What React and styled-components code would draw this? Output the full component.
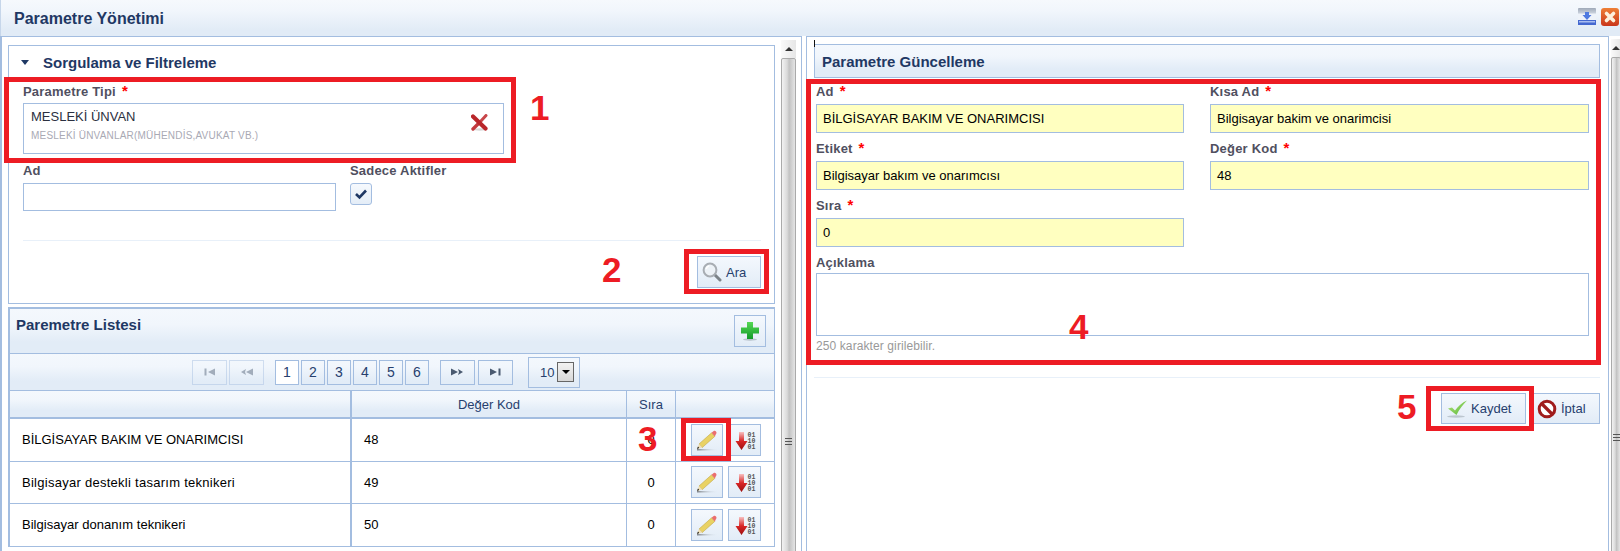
import React from "react";
import styled, { createGlobalStyle } from "styled-components";

const GlobalStyle = createGlobalStyle`
  html, body { margin: 0; padding: 0; background: #fff; }
  body { font-family: "Liberation Sans", Arial, sans-serif; font-size: 12px; color: #000; }
  * { box-sizing: border-box; }
`;

const line = "#a3bde0";
const headGradient = "linear-gradient(to bottom, #f4f8fd 0%, #f1f6fc 35%, #e2ecf7 75%, #e2ecf7 100%)";
const navy = "#1f3864";

const Page = styled.div`
  position: relative;
  width: 1620px;
  height: 551px;
  overflow: hidden;
  background: #fff;
`;

const TitleBar = styled.header`
  height: 36px;
  padding: 0 1px 0 13px;
  display: flex;
  align-items: center;
  justify-content: space-between;
  background: linear-gradient(to bottom, #f6f9fd 0%, #f1f6fc 30%, #e1ebf6 85%);
  border-left: 1px solid #c6d6ea;
`;

const PageTitle = styled.h1`
  margin: 2px 0 0 0;
  font-size: 16px;
  font-weight: bold;
  color: ${navy};
`;

const WindowIcons = styled.div`
  display: flex;
  gap: 5px;
  margin-top: -3px;
`;

const Body = styled.div`
  display: flex;
  height: 515px;
`;

const LeftPane = styled.div`
  width: 802px;
  flex: none;
  display: flex;
  border-top: 1px solid ${line};
  border-right: 1px solid ${line};
  border-left: 2px solid ${line};
  padding-left: 6px;
`;

const LeftContent = styled.div`
  width: 767px;
  flex: none;
  padding-top: 8px;
`;

const Scroller = styled.div`
  flex: none;
  width: ${(p) => p.$width}px;
  margin: 3px ${(p) => p.$right}px 0 ${(p) => p.$left}px;
  display: flex;
  flex-direction: column;
  overflow: hidden;
  background: #f3f3f3;
`;

const ScrollArrow = styled.div`
  height: 18px;
  flex: none;
  display: flex;
  align-items: center;
  justify-content: center;
  background: linear-gradient(to right, #fafafa, #e6e6e6);
  &::before {
    content: "";
    border-left: 4px solid transparent;
    border-right: 4px solid transparent;
    border-bottom: 4px solid #333;
  }
`;

const ScrollThumb = styled.div`
  flex: none;
  height: ${(p) => p.$height}px;
  border: 1px solid #aaa;
  border-radius: 2px 2px 0 0;
  background: linear-gradient(to right, #f2f2f2 0%, #d9d9d9 40%, #c2c2c2 55%, #e4e4e4 100%);
  display: flex;
  align-items: center;
  justify-content: center;
`;

const Grip = styled.div`
  width: 7px;
  height: 7px;
  border-top: 1px solid #555;
  border-bottom: 1px solid #555;
  &::before {
    content: "";
    display: block;
    margin-top: 2px;
    height: 1px;
    background: #555;
  }
`;

const FilterPanel = styled.section`
  height: 259px;
  border: 1px solid ${line};
  padding: 0 13px 0 14px;
  display: flex;
  flex-direction: column;
`;

const FilterHeading = styled.div`
  height: 38px;
  padding-bottom: 6px;
  display: flex;
  align-items: center;
  gap: 14px;
  margin-left: -2px;
  font-size: 15px;
  font-weight: bold;
  color: ${navy};
  &::before {
    content: "";
    margin-top: 1px;
    border-left: 4.5px solid transparent;
    border-right: 4.5px solid transparent;
    border-top: 5px solid ${navy};
  }
`;

const Label = styled.label`
  display: block;
  height: 16px;
  line-height: 16px;
  font-size: 13px;
  font-weight: bold;
  letter-spacing: 0.2px;
  color: #50505f;
  white-space: nowrap;
`;

const Star = styled.span`
  display: inline-block;
  margin-left: 6px;
  font-size: 15px;
  line-height: 12px;
  font-weight: bold;
  color: #f00;
  vertical-align: 0;
`;

const TypeBox = styled.div`
  position: relative;
  width: 481px;
  height: 51px;
  margin-top: 3px;
  padding: 4px 7px;
  border: 1px solid ${line};
`;

const TypeName = styled.div`
  font-size: 13px;
  line-height: 18px;
  color: #2b3040;
`;

const TypeHint = styled.div`
  font-size: 10px;
  line-height: 20px;
  letter-spacing: 0.2px;
  color: #a9a9b4;
`;

const ClearIcon = styled.span`
  position: absolute;
  right: 15px;
  top: 10px;
  display: block;
  line-height: 0;
`;

const FilterRow = styled.div`
  display: flex;
  gap: 14px;
  margin-top: 9px;
`;

const NameColumn = styled.div`
  width: 313px;
`;

const TextInput = styled.input`
  display: block;
  width: 100%;
  height: 28px;
  margin-top: 4px;
  border: 1px solid ${line};
  background: #fff;
  outline: none;
`;

const CheckBox = styled.span`
  display: flex;
  align-items: center;
  justify-content: center;
  width: 22px;
  height: 22px;
  margin-top: 4px;
  border: 1px solid ${line};
  border-radius: 3px;
  background: linear-gradient(to bottom, #f6f9fd, #e4edf7);
`;

const Divider = styled.hr`
  margin: ${(p) => p.$top}px 0 0;
  border: 0;
  height: 1px;
  background: #e8f0f9;
`;

const ButtonRow = styled.div`
  display: flex;
  justify-content: flex-end;
  gap: ${(p) => p.$gap || 0}px;
  margin-top: ${(p) => p.$top}px;
`;

const Button = styled.button`
  display: flex;
  align-items: center;
  gap: ${(p) => p.$gap}px;
  width: ${(p) => p.$width}px;
  height: ${(p) => p.$height}px;
  padding: 0 0 0 ${(p) => p.$pad}px;
  border: 1px solid ${line};
  background: linear-gradient(to bottom, #f4f8fd, #e2ecf7);
  font: 13px "Liberation Sans", Arial, sans-serif;
  color: #27406e;
`;

const ListPanel = styled.section`
  margin-top: 3px;
  border: 2px solid ${line};
  border-bottom: 0;
  border-right-width: 1px;
`;

const ListHeader = styled.div`
  height: 45px;
  padding: 6px 8px 0 6px;
  display: flex;
  justify-content: space-between;
  background: ${headGradient};
  border-bottom: 1px solid ${line};
`;

const ListTitle = styled.h2`
  margin: 1px 0 0;
  font-size: 15px;
  font-weight: bold;
  color: ${navy};
`;

const IconButton = styled.button`
  display: flex;
  align-items: center;
  justify-content: center;
  width: ${(p) => p.$width || 32}px;
  height: 32px;
  padding: 0;
  border: 1px solid ${line};
  background: linear-gradient(to bottom, #f4f8fd, #e2ecf7);
`;

const Pager = styled.div`
  height: 37px;
  padding: 0 0 0 182px;
  display: flex;
  align-items: center;
  background: ${headGradient};
  border-bottom: 1px solid ${line};
`;

const PageStep = styled.span`
  display: flex;
  align-items: center;
  justify-content: center;
  width: 35px;
  height: 25px;
  margin-right: ${(p) => p.$right || 0}px;
  border: 1px solid ${line};
  opacity: ${(p) => (p.$off ? 0.45 : 1)};
`;

const PageNumber = styled.span`
  display: flex;
  align-items: center;
  justify-content: center;
  width: 24px;
  height: 25px;
  margin-right: ${(p) => p.$right || 2}px;
  border: 1px solid ${line};
  background: ${(p) => (p.$active ? "#fff" : "transparent")};
  font-size: 14px;
  color: #27406e;
`;

const PageSize = styled.span`
  display: flex;
  align-items: center;
  justify-content: space-between;
  width: 52px;
  height: 31px;
  padding: 0 5px 0 11px;
  border: 1px solid ${line};
  font-size: 13px;
  color: #27406e;
`;

const SizeArrow = styled.span`
  display: flex;
  align-items: center;
  justify-content: center;
  width: 17px;
  height: 20px;
  border: 1px solid #666;
  background: linear-gradient(to bottom, #f2f2f2, #d8d8d8);
  &::before {
    content: "";
    border-left: 4px solid transparent;
    border-right: 4px solid transparent;
    border-top: 4px solid #000;
  }
`;

const GridRow = styled.div`
  display: grid;
  grid-template-columns: 342px 275px 49px 1fr;
  height: ${(p) => p.$height}px;
  border-bottom: ${(p) => p.$rule}px solid ${line};
  background: ${(p) => (p.$head ? headGradient : "#fff")};
`;

const Cell = styled.div`
  display: flex;
  align-items: center;
  justify-content: ${(p) => (p.$center ? "center" : "flex-start")};
  padding: 0 ${(p) => (p.$center ? 0 : 12)}px;
  border-right: ${(p) => p.$rule || 1}px solid ${line};
  font-size: 13px;
  letter-spacing: ${(p) => p.$spacing || 0}px;
  color: ${(p) => (p.$head ? "#27406e" : "#000")};
  &:last-child { border-right: 0; }
`;

const ActionCell = styled(Cell)`
  gap: 5px;
  padding: 0 0 0 15px;
`;

const RightPane = styled.div`
  margin-left: 4px;
  width: 803px;
  flex: none;
  border: 1px solid ${line};
  border-bottom: 0;
  padding: 7px 8px 0 7px;
`;

const FormHeader = styled.div`
  position: relative;
  height: 34px;
  display: flex;
  align-items: center;
  padding-left: 7px;
  border: 1px solid ${line};
  background: ${headGradient};
  font-size: 15px;
  font-weight: bold;
  color: ${navy};
  &::before {
    content: "";
    position: absolute;
    left: -1px;
    top: -5px;
    width: 1px;
    height: 7px;
    background: #111;
  }
`;

const FormGrid = styled.div`
  display: grid;
  grid-template-columns: 368px 379px;
  column-gap: 26px;
  row-gap: 8px;
  padding: 6px 0 0 2px;
`;

const Field = styled.div`
  grid-column: ${(p) => (p.$wide ? "1 / -1" : "auto")};
`;

const ValueBox = styled.div`
  height: 29px;
  margin-top: 4px;
  padding: 0 6px;
  display: flex;
  align-items: center;
  border: 1px solid ${line};
  background: #ffffc0;
  font-size: 13px;
  color: #000;
`;

const TextArea = styled.textarea`
  display: block;
  width: 100%;
  height: 63px;
  margin-top: 2px;
  border: 1px solid ${line};
  outline: none;
  resize: none;
`;

const Hint = styled.div`
  margin-top: 3px;
  line-height: 14px;
  font-size: 12px;
  letter-spacing: 0.1px;
  color: #999;
`;

const Mark = styled.div`
  position: absolute;
  left: ${(p) => p.$x}px;
  top: ${(p) => p.$y}px;
  width: ${(p) => p.$w}px;
  height: ${(p) => p.$h}px;
  border: 5px solid #ed1c24;
  pointer-events: none;
`;

const MarkNumber = styled.span`
  position: absolute;
  left: ${(p) => p.$x}px;
  top: ${(p) => p.$y}px;
  font-size: 35px;
  line-height: 36px;
  font-weight: bold;
  color: #ed1c24;
`;

const TopIcon = ({ kind }) =>
  kind === "down" ? (
    <svg width="18" height="18" viewBox="0 0 18 18">
      <defs>
        <linearGradient id="winFace" x1="0" y1="0" x2="0" y2="1">
          <stop offset="0" stopColor="#9fa9b8" />
          <stop offset="0.3" stopColor="#c8d0dc" />
          <stop offset="0.35" stopColor="#eef3fa" />
          <stop offset="1" stopColor="#eef3fa" />
        </linearGradient>
      </defs>
      <rect x="0" y="0" width="18" height="17" rx="1" fill="url(#winFace)" />
      <rect x="0" y="12" width="18" height="5" fill="#4468d0" />
      <rect x="1" y="13" width="16" height="1.5" fill="#a9bdf0" />
      <path d="M7 4h4v3h2.5L9 12 4.5 7H7z" fill="#4f7ae0" />
    </svg>
  ) : (
    <svg width="18" height="18" viewBox="0 0 18 18">
      <defs>
        <linearGradient id="winClose" x1="0" y1="0" x2="0" y2="1">
          <stop offset="0" stopColor="#ee7f36" />
          <stop offset="1" stopColor="#c9361a" />
        </linearGradient>
      </defs>
      <rect x="0" y="0" width="18" height="18" rx="3" fill="url(#winClose)" />
      <path d="M5.5 5.5l7 7M12.5 5.5l-7 7" stroke="#fdf1dc" strokeWidth="3.6" strokeLinecap="round" />
    </svg>
  );

const RedCross = () => (
  <svg width="17" height="17" viewBox="0 0 17 17">
    <ellipse cx="9" cy="15.5" rx="7" ry="1.2" fill="#d8d8d8" />
    <path d="M9.5 7.5L15 1.5" stroke="#c8464a" strokeWidth="3" strokeLinecap="round" />
    <path d="M7.5 9.5L2 15" stroke="#c23a3e" strokeWidth="3.4" strokeLinecap="round" />
    <path d="M2 2.5L14.5 14.5" stroke="#b9262a" strokeWidth="4.2" strokeLinecap="round" />
  </svg>
);

const TickIcon = () => (
  <svg width="14" height="12" viewBox="0 0 14 12">
    <path d="M2 6l3.5 3.5L12 2.5" fill="none" stroke="#1f3864" strokeWidth="2.6" />
  </svg>
);

const SearchIcon = () => (
  <svg width="20" height="20" viewBox="0 0 20 20">
    <path d="M12 12l6 6" stroke="#7b8288" strokeWidth="3" strokeLinecap="round" />
    <circle cx="8" cy="8" r="6.4" fill="#edf2f7" stroke="#a8adb3" strokeWidth="2" />
    <path d="M4.2 7a4.2 4.2 0 0 1 3-3.2" fill="none" stroke="#fff" strokeWidth="1.4" />
  </svg>
);

const PlusIcon = () => (
  <svg width="20" height="20" viewBox="0 0 20 20">
    <defs>
      <linearGradient id="plusFill" x1="0" y1="0" x2="0" y2="1">
        <stop offset="0" stopColor="#55d855" />
        <stop offset="1" stopColor="#129a28" />
      </linearGradient>
    </defs>
    <ellipse cx="10" cy="18.5" rx="7" ry="1.2" fill="#b8c2cc" />
    <path d="M7 1h6v5.5h6v6h-6V18H7v-5.5H1v-6h6z" fill="url(#plusFill)" />
  </svg>
);

const PencilIcon = () => (
  <svg width="24" height="24" viewBox="0 0 24 24">
    <defs>
      <linearGradient id="shade" x1="0" y1="0" x2="1" y2="0">
        <stop offset="0" stopColor="#7d8288" />
        <stop offset="1" stopColor="#e2ecf7" stopOpacity="0" />
      </linearGradient>
    </defs>
    <rect x="2" y="21" width="21" height="1.5" fill="url(#shade)" />
    <path d="M4 16L16.6 4.8l3.2 3.6L7.2 19.6z" fill="#e9d264" stroke="#c2a848" strokeWidth="0.6" />
    <path d="M4 16l3.2 3.6L2 21z" fill="#f1dfb4" />
    <path d="M3 18.6l1.2 1.4L2 21z" fill="#111" />
    <path d="M16.6 4.8L18.4 3.2c.9-.7 1.9-.6 2.6.2.7.8.7 1.8 0 2.6L19.8 8.4z" fill="#ea6f6f" />
  </svg>
);

const BinaryIcon = () => (
  <svg width="24" height="24" viewBox="0 0 24 24">
    <defs>
      <linearGradient id="arrowRed" x1="0" y1="0" x2="0" y2="1">
        <stop offset="0" stopColor="#f7c0c0" />
        <stop offset="0.5" stopColor="#d92626" />
        <stop offset="1" stopColor="#9c1010" />
      </linearGradient>
    </defs>
    <path d="M6 4h5v9h3.5L8.5 22 2.5 13H6z" fill="url(#arrowRed)" />
    <g fontFamily="Liberation Mono, monospace" fontSize="6.5" fontWeight="bold" fill="#555">
      <text x="14.5" y="9">01</text>
      <text x="14.5" y="15">10</text>
      <text x="14.5" y="21">01</text>
    </g>
  </svg>
);

const OkIcon = () => (
  <svg width="21" height="19" viewBox="0 0 21 19">
    <defs>
      <linearGradient id="okFill" x1="0" y1="0" x2="1" y2="1">
        <stop offset="0" stopColor="#b6e37a" />
        <stop offset="1" stopColor="#57b83a" />
      </linearGradient>
    </defs>
    <ellipse cx="9" cy="17.5" rx="9" ry="1.2" fill="#bcc6cf" />
    <path d="M1 9.5l4-1 3 3C11 7.5 15 3.5 20 1.5c-4 4-8 9-10.5 14.5z" fill="url(#okFill)" />
  </svg>
);

const CancelIcon = () => (
  <svg width="20" height="20" viewBox="0 0 20 20">
    <circle cx="10" cy="10" r="7.8" fill="#fff" stroke="#a01c1c" strokeWidth="3" />
    <path d="M4.5 4.5l11 11" stroke="#a01c1c" strokeWidth="3.2" />
  </svg>
);

const StepIcon = ({ dir, bar }) => (
  <svg width="13" height="8" viewBox="0 0 13 8" style={{ transform: dir === "back" ? "scaleX(-1)" : "none" }}>
    {bar ? (
      <g fill="#4a5a70">
        <path d="M1 .5v7L8 4z" />
        <rect x="9.5" y="0.5" width="2" height="7" />
      </g>
    ) : (
      <g fill="#4a5a70">
        <path d="M0 .5v7L7 4z" />
        <path d="M7 1l5 3-5 3 1-3z" />
      </g>
    )}
  </svg>
);

const rows = [
  { name: "BİLGİSAYAR BAKIM VE ONARIMCISI", code: "48", order: "0", spacing: 0 },
  { name: "Bilgisayar destekli tasarım teknikeri", code: "49", order: "0", spacing: 0.27 },
  { name: "Bilgisayar donanım teknikeri", code: "50", order: "0", spacing: 0.03 },
];

const formFields = [
  { label: "Ad", value: "BİLGİSAYAR BAKIM VE ONARIMCISI" },
  { label: "Kısa Ad", value: "Bilgisayar bakim ve onarimcisi" },
  { label: "Etiket", value: "Bilgisayar bakım ve onarımcısı" },
  { label: "Değer Kod", value: "48" },
  { label: "Sıra", value: "0" },
];

export default function App() {
  return (
    <Page>
      <GlobalStyle />
      <TitleBar>
        <PageTitle>Parametre Yönetimi</PageTitle>
        <WindowIcons>
          <TopIcon kind="down" />
          <TopIcon kind="close" />
        </WindowIcons>
      </TitleBar>

      <Body>
        <LeftPane>
          <LeftContent>
            <FilterPanel>
              <FilterHeading>Sorgulama ve Filtreleme</FilterHeading>
              <Label>
                Parametre Tipi<Star>*</Star>
              </Label>
              <TypeBox>
                <TypeName>MESLEKİ ÜNVAN</TypeName>
                <TypeHint>MESLEKİ ÜNVANLAR(MÜHENDİS,AVUKAT VB.)</TypeHint>
                <ClearIcon>
                  <RedCross />
                </ClearIcon>
              </TypeBox>
              <FilterRow>
                <NameColumn>
                  <Label>Ad</Label>
                  <TextInput />
                </NameColumn>
                <div>
                  <Label>Sadece Aktifler</Label>
                  <CheckBox>
                    <TickIcon />
                  </CheckBox>
                </div>
              </FilterRow>
              <Divider $top={29} />
              <ButtonRow $top={15}>
                <Button $width={64} $height={32} $pad={4} $gap={4}>
                  <SearchIcon />
                  Ara
                </Button>
              </ButtonRow>
            </FilterPanel>

            <ListPanel>
              <ListHeader>
                <ListTitle>Paremetre Listesi</ListTitle>
                <IconButton>
                  <PlusIcon />
                </IconButton>
              </ListHeader>
              <Pager>
                <PageStep $off $right={2}><StepIcon dir="back" bar /></PageStep>
                <PageStep $off $right={11}><StepIcon dir="back" /></PageStep>
                <PageNumber $active>1</PageNumber>
                <PageNumber>2</PageNumber>
                <PageNumber>3</PageNumber>
                <PageNumber>4</PageNumber>
                <PageNumber>5</PageNumber>
                <PageNumber $right={11}>6</PageNumber>
                <PageStep $right={3}><StepIcon /></PageStep>
                <PageStep $right={15}><StepIcon bar /></PageStep>
                <PageSize>
                  10
                  <SizeArrow />
                </PageSize>
              </Pager>
              <GridRow $head $height={28} $rule={2}>
                <Cell $head $rule={2} />
                <Cell $head $center>Değer Kod</Cell>
                <Cell $head $center>Sıra</Cell>
                <Cell $head />
              </GridRow>
              {rows.map((row) => (
                <GridRow key={row.code} $height={42.5} $rule={1}>
                  <Cell $rule={2} $spacing={row.spacing}>{row.name}</Cell>
                  <Cell>{row.code}</Cell>
                  <Cell $center>{row.order}</Cell>
                  <ActionCell>
                    <IconButton><PencilIcon /></IconButton>
                    <IconButton $width={33}><BinaryIcon /></IconButton>
                  </ActionCell>
                </GridRow>
              ))}
            </ListPanel>
          </LeftContent>
          <Scroller $width={15} $left={6} $right={4}>
            <ScrollArrow />
            <ScrollThumb $height={766}><Grip /></ScrollThumb>
          </Scroller>
        </LeftPane>

        <RightPane>
          <FormHeader>Parametre Güncelleme</FormHeader>
          <FormGrid>
            {formFields.map((field) => (
              <Field key={field.label}>
                <Label>
                  {field.label}<Star>*</Star>
                </Label>
                <ValueBox>{field.value}</ValueBox>
              </Field>
            ))}
            <Field $wide>
              <Label>Açıklama</Label>
              <TextArea />
              <Hint>250 karakter girilebilir.</Hint>
            </Field>
          </FormGrid>
          <Divider $top={24} />
          <ButtonRow $top={15} $gap={4}>
            <Button $width={85} $height={31} $pad={5} $gap={3}>
              <OkIcon />
              Kaydet
            </Button>
            <Button $width={70} $height={31} $pad={6} $gap={4}>
              <CancelIcon />
              İptal
            </Button>
          </ButtonRow>
        </RightPane>

        <Scroller $width={10} $left={2} $right={0}>
          <ScrollArrow />
          <ScrollThumb $height={760}><Grip /></ScrollThumb>
        </Scroller>
      </Body>

      <Mark $x={4} $y={77} $w={512} $h={86} />
      <Mark $x={684} $y={249} $w={85} $h={45} />
      <Mark $x={681} $y={418} $w={50} $h={43} />
      <Mark $x={806} $y={79} $w={795} $h={286} />
      <Mark $x={1426} $y={386} $w={108} $h={45} />
      <MarkNumber $x={530} $y={90}>1</MarkNumber>
      <MarkNumber $x={602} $y={252}>2</MarkNumber>
      <MarkNumber $x={638} $y={421}>3</MarkNumber>
      <MarkNumber $x={1069} $y={309}>4</MarkNumber>
      <MarkNumber $x={1397} $y={389}>5</MarkNumber>
    </Page>
  );
}
